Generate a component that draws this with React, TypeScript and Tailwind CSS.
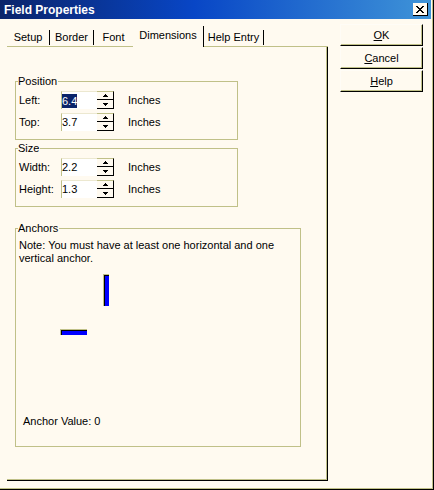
import React from "react";

function SpinArrow({ up }: { up: boolean }) {
  return (
    <svg width="5" height="3" viewBox="0 0 5 3" shapeRendering="crispEdges">
      {up ? (
        <path d="M2 0h1v1h1v1h1v1H0V2h1V1h1z" fill="#000" />
      ) : (
        <path d="M0 0h5v1H4v1H3v1H2V2H1V1H0z" fill="#000" />
      )}
    </svg>
  );
}

function Row({ label, value, selected }: { label: string; value: string; selected?: boolean }) {
  return (
    <div className="flex items-center h-[18px]">
      <div className="w-[45px] pl-[3px] leading-[13px]">{label}</div>
      <div className="w-[36px] h-[18px] bg-white border-l border-t border-l-[#c0c088] border-t-[#ece8d0] flex items-center leading-[13px]">
        {selected ? (
          <span className="bg-[#0a246a] text-white px-[0px] leading-[14px]">{value}</span>
        ) : (
          <span>{value}</span>
        )}
      </div>
      <div className="w-[17px] h-[18px] flex flex-col">
        <div className="h-[9px] border-t border-r border-b border-t-[#c0c088] border-r-black border-b-black flex items-center justify-center">
          <SpinArrow up />
        </div>
        <div className="h-[9px] border-r border-b border-black flex items-center justify-center">
          <SpinArrow up={false} />
        </div>
      </div>
      <div className="ml-[14px] leading-[13px]">Inches</div>
    </div>
  );
}

function Group({ title, className, children }: { title: string; className: string; children: React.ReactNode }) {
  return (
    <div className={"relative border border-[#c0c088] " + className}>
      <span className="absolute left-[2px] top-[-7px] bg-[#fffaf0] leading-[13px] pr-[1px]">{title}</span>
      {children}
    </div>
  );
}

function Btn({ children }: { children: React.ReactNode }) {
  return (
    <div className="h-[22px] w-full border-r border-b border-black border-t border-l border-t-[#fffcf6] border-l-[#fffcf6] shadow-[inset_-1px_-1px_0_#c0c088] flex items-center justify-center leading-[13px]">
      {children}
    </div>
  );
}

export default function App() {
  return (
    <div className="w-[434px] h-[490px] bg-[#fffaf0] text-black text-[11px] font-['Liberation_Sans',Arial,sans-serif] border-r border-b border-black shadow-[inset_-1px_-1px_0_#c0c088] flex flex-col overflow-hidden">
      {/* Title bar */}
      <div className="h-[19px] mr-[2px] flex items-center justify-between pl-[4px] pr-[3px] bg-[linear-gradient(to_right,#0a246a_0%,#0846c6_45%,#3f94d8_100%)]">
        <span className="text-white font-bold text-[12px] leading-[14px]">Field Properties</span>
        <div className="w-[15px] h-[13px] bg-[#fffaf0] border-r border-b border-black flex items-center justify-center">
          <svg width="8" height="7" viewBox="0 0 8 7" shapeRendering="crispEdges">
            <path d="M0 0h2v1h1v1h2V1h1V0h2v1H7v1H6v1H5v1h1v1h1v1h1v1H6V6H5V5H3v1H2v1H0V6h1V5h1V4h1V3H2V2H1V1H0z" fill="#000" />
          </svg>
        </div>
      </div>

      {/* Body */}
      <div className="flex pl-[7px]">
        {/* Left: tabs + panel */}
        <div className="w-[321px] flex flex-col mt-[7px]">
          <div className="flex items-end h-[21px]">
            <div className="w-[43px] h-[18px] border-b border-[#c0c088] flex">
              <div className="flex-1 h-[15px] border-r border-black flex items-center justify-center leading-[13px] mt-[1px]">Setup</div>
            </div>
            <div className="w-[44px] h-[18px] border-b border-[#c0c088] flex">
              <div className="flex-1 h-[15px] border-r border-black flex items-center justify-center leading-[13px] mt-[1px]">Border</div>
            </div>
            <div className="w-[39px] h-[18px] border-b border-[#c0c088] flex">
              <div className="flex-1 h-[15px] flex items-center justify-center leading-[13px] mt-[1px]">Font</div>
            </div>
            <div className="w-[71px] h-[21px] border-r border-black flex justify-center pt-[3px] leading-[13px]">Dimensions</div>
            <div className="w-[60px] h-[18px] border-b border-[#c0c088] flex">
              <div className="flex-1 h-[15px] border-r border-black flex items-center justify-center leading-[13px] mt-[1px]">Help Entry</div>
            </div>
            <div className="flex-1 h-[18px] border-b border-[#c0c088]" />
          </div>

          <div className="h-[434px] border-r border-b border-black shadow-[inset_-1px_-1px_0_#c0c088] pl-[8px] flex flex-col">
            <Group title="Position" className="mt-[34px] w-[223px] h-[59px] pt-[9px] flex flex-col gap-[4px]">
              <Row label="Left:" value="6.4" selected />
              <Row label="Top:" value="3.7" />
            </Group>
            <Group title="Size" className="mt-[8px] w-[223px] h-[59px] pt-[9px] flex flex-col gap-[4px]">
              <Row label="Width:" value="2.2" />
              <Row label="Height:" value="1.3" />
            </Group>
            <Group title="Anchors" className="mt-[21px] w-[286px] h-[219px] pt-[10px] flex flex-col">
              <div className="pl-[3px] leading-[13px] whitespace-nowrap">
                Note: You must have at least one horizontal and one
                <br />
                vertical anchor.
              </div>
              <div className="relative h-[150px]">
                <div className="absolute left-[87px] top-[9px] w-[6px] h-[32px] border-l border-t border-[#c0c088] bg-[#0000ff] shadow-[inset_1px_1px_0_#000]" />
                <div className="absolute left-[44px] top-[64px] w-[27px] h-[6px] border-l border-t border-[#c0c088] bg-[#0000ff] shadow-[inset_1px_1px_0_#000]" />
              </div>
              <div className="pl-[7px] leading-[13px]">Anchor Value: 0</div>
            </Group>
          </div>
        </div>

        {/* Right: buttons */}
        <div className="ml-[12px] mt-[5px] w-[83px] flex flex-col gap-[1px]">
          <Btn>
            <span><span className="underline">O</span>K</span>
          </Btn>
          <Btn>
            <span><span className="underline">C</span>ancel</span>
          </Btn>
          <Btn>
            <span><span className="underline">H</span>elp</span>
          </Btn>
        </div>
      </div>
    </div>
  );
}
